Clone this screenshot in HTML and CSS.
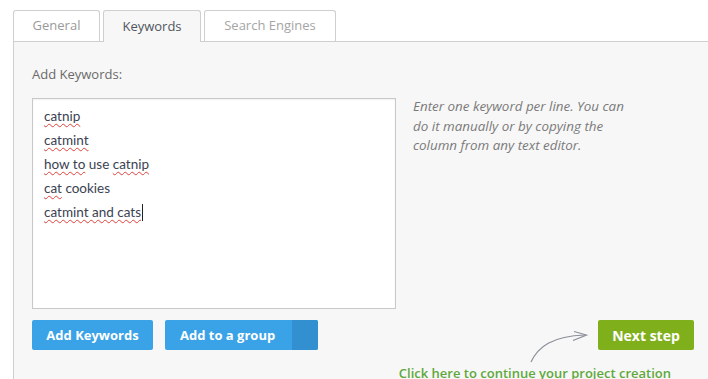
FILE: index.html
```html
<!DOCTYPE html>
<html>
<head>
<meta charset="utf-8">
<link rel="stylesheet" href="styles.css">
</head>
<body>
<div class="page">
  <div class="tabs">
    <div class="tab tab-general">General</div>
    <div class="tab tab-active">Keywords</div>
    <div class="tab tab-search">Search Engines</div>
  </div>
  <div class="panel">
    <div class="label">Add Keywords:</div>
    <div class="editor-row">
      <div class="editor">
        <div class="line"><span class="sp">catnip</span></div>
        <div class="line"><span class="sp">catmint</span></div>
        <div class="line"><span class="sp">how to</span> use <span class="sp">catnip</span></div>
        <div class="line"><span class="sp">cat</span> cookies</div>
        <div class="line"><span class="sp">catmint and cats</span><span class="caret"></span></div>
      </div>
      <div class="hint">Enter one keyword per line. You can do it manually or by copying the column from any text editor.</div>
    </div>
    <div class="actions">
      <div class="left-btns">
        <button class="btn btn-blue btn-add">Add Keywords</button>
        <button class="btn btn-blue btn-group"><span class="btn-group-label">Add to a group</span><span class="btn-group-caret"></span></button>
      </div>
      <div class="right-col">
        <div class="next-row">
          <svg class="arrow" width="66" height="44" viewBox="526 320 66 44">
            <path d="M531 362 C 538 347, 552 336, 585 335" fill="none" stroke="#8a8f99" stroke-width="1.2"/>
            <path d="M574 331.5 L586.5 335 L573 340.5" fill="none" stroke="#8a8f99" stroke-width="1.2"/>
          </svg>
          <button class="btn btn-green">Next step</button>
        </div>
        <div class="caption">Click here to continue your project creation</div>
      </div>
    </div>
  </div>
</div>
</body>
</html>
```
FILE: styles.css
```css
* { box-sizing: border-box; }
html, body { margin: 0; padding: 0; background: #fff; overflow: hidden; }
body { font-family: "Open Sans", "Liberation Sans", sans-serif; font-size: 13px; }
.page { padding: 10px 0 0 13px; }
.tabs { display: flex; gap: 3px; height: 31px; }
.tab {
  height: 32px;
  border: 1px solid #cfcfcf;
  border-bottom: none;
  border-radius: 3px 3px 0 0;
  background: #fff;
  color: #9a9a9a;
  display: flex;
  align-items: center;
  justify-content: center;
  padding-bottom: 2px;
  position: relative;
}
.tab-general { width: 87px; }
.tab-active { width: 98px; background: #f7f7f7; color: #4f5560; z-index: 2; }
.tab-search { width: 132px; color: #a5a5a5; }
.tab-general, .tab-search { height: 31px; }
.panel {
  border-top: 1px solid #cfcfcf;
  border-left: 1px solid #cfcfcf;
  background: #f7f7f7;
  padding: 22px 14px 20px 18px;
  height: 340px;
}
.label { color: #6a6a6a; line-height: 20px; }
.editor-row { display: flex; margin-top: 14px; gap: 17px; }
.editor {
  width: 364px;
  height: 211px;
  background: #fff;
  border: 1px solid #c8c8c8;
  box-shadow: inset 0 1px 2px rgba(0,0,0,0.06);
  padding: 5px 11px;
  font-family: Lato, "Open Sans", sans-serif;
  font-size: 13.5px;
  color: #3b4252;
}
.line { line-height: 24px; height: 24px; white-space: nowrap; }
.sp { text-decoration: underline wavy #e0413a; text-decoration-thickness: 1px; text-underline-offset: 2px; }
.caret { display: inline-block; width: 1px; height: 17px; background: #222; vertical-align: -4px; margin-left: 1px; }
.hint {
  width: 226px;
  font-style: italic;
  font-size: 13.4px;
  color: #7a7a7a;
  line-height: 19.5px;
  margin-top: -1px;
}
.actions { display: flex; justify-content: space-between; margin-top: 11px; }
.left-btns { display: flex; gap: 12px; align-items: flex-start; }
.btn {
  height: 30px;
  border: none;
  border-radius: 2px;
  color: #fff;
  font-family: "Open Sans", "Liberation Sans", sans-serif;
  font-weight: 700;
  font-size: 13px;
  padding: 0;
  display: flex;
  align-items: center;
  justify-content: center;
}
.btn-blue { background: #3aa2e6; }
.btn-add { width: 121px; }
.btn-group { width: 153px; justify-content: space-between; overflow: hidden; }
.btn-group-label { padding-left: 15px; }
.btn-group-caret { width: 26px; height: 30px; background: #3390d0; }
.right-col { display: flex; flex-direction: column; align-items: flex-end; }
.next-row { display: flex; gap: 6px; align-items: flex-start; }
.arrow { display: block; }
.btn-green { width: 96px; background: #7fb01c; font-size: 14px; }
.caption {
  margin-top: 0px;
  margin-right: 23px;
  color: #5fa83c;
  font-weight: 600;
  font-size: 13px;
  line-height: 18px;
  white-space: nowrap;
}
```
